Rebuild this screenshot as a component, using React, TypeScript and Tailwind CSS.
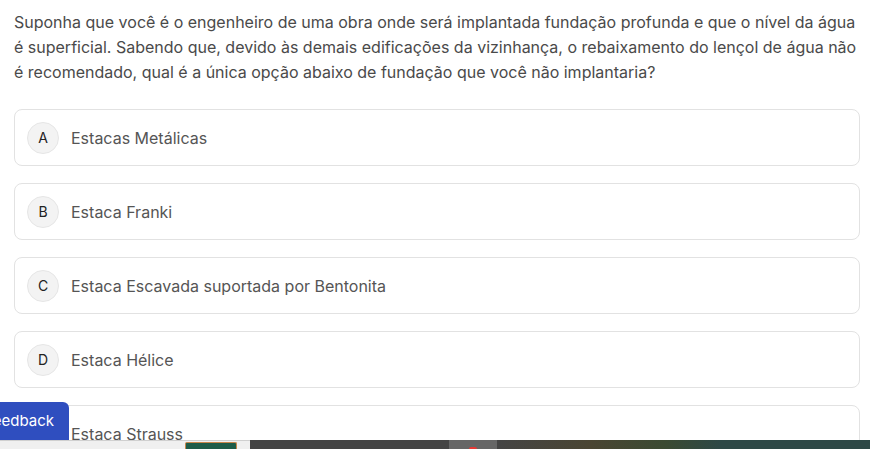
import React from "react";

const options = [
  { l: "A", t: "Estacas Metálicas" },
  { l: "B", t: "Estaca Franki" },
  { l: "C", t: "Estaca Escavada suportada por Bentonita" },
  { l: "D", t: "Estaca Hélice" },
  { l: "E", t: "Estaca Strauss" },
];

export default function App() {
  return (
    <div className="relative h-[449px] w-[870px] overflow-hidden bg-white" style={{ fontFamily: "Inter, 'Noto Sans', sans-serif" }}>
      <div className="pl-[14px] pt-[10px]">
        <p className="w-[852px] text-[16px] leading-[25px] text-[#4a4a4a]">
          Suponha que você é o engenheiro de uma obra onde será implantada fundação profunda e que o nível da água é superficial. Sabendo que, devido às demais edificações da vizinhança, o rebaixamento do lençol de água não é recomendado, qual é a única opção abaixo de fundação que você não implantaria?
        </p>
        <div className="mt-[24px] flex w-[846px] flex-col gap-[17px]">
          {options.map((o) => (
            <div key={o.l} className="flex h-[57px] items-center gap-[12px] rounded-[8px] border border-[#e2e2e2] bg-white px-[12px]">
              <div className="flex h-[32px] w-[32px] shrink-0 items-center justify-center rounded-full border border-[#e6e6e6] bg-[#f3f3f3] text-[14px] text-[#222]">
                {o.l}
              </div>
              <span className="text-[16px] text-[#555]">{o.t}</span>
            </div>
          ))}
        </div>
      </div>

      <div className="absolute left-0 top-[402px] flex h-[38px] w-[69px] items-center justify-end rounded-tr-[6px] bg-[#2f4ebf] pr-[15px] text-[15px] text-white">
        <span className="whitespace-nowrap">eedback</span>
      </div>

      <div className="absolute bottom-0 left-0 flex h-[9px] w-[870px]">
        <div className="relative w-[250px] border-t border-[#d0d0d0] bg-[#f0f0f0]">
          <div className="absolute left-[185px] top-[1px] h-[8px] w-[52px] rounded-t-[2px] border border-b-0 border-[#c8864a] bg-[#1e5c48]" />
        </div>
        <div className="w-[199px] bg-[#444444]" />
        <div className="relative w-[48px] bg-[#666666]">
          <div className="absolute left-[20px] top-[7px] h-[4px] w-[8px] rounded-full bg-[#e53935]" />
        </div>
        <div className="flex-1 bg-[linear-gradient(90deg,#444444_0%,#4a4533_25%,#3b4a32_45%,#2e4846_60%,#2e4846_100%)]" />
      </div>
    </div>
  );
}
